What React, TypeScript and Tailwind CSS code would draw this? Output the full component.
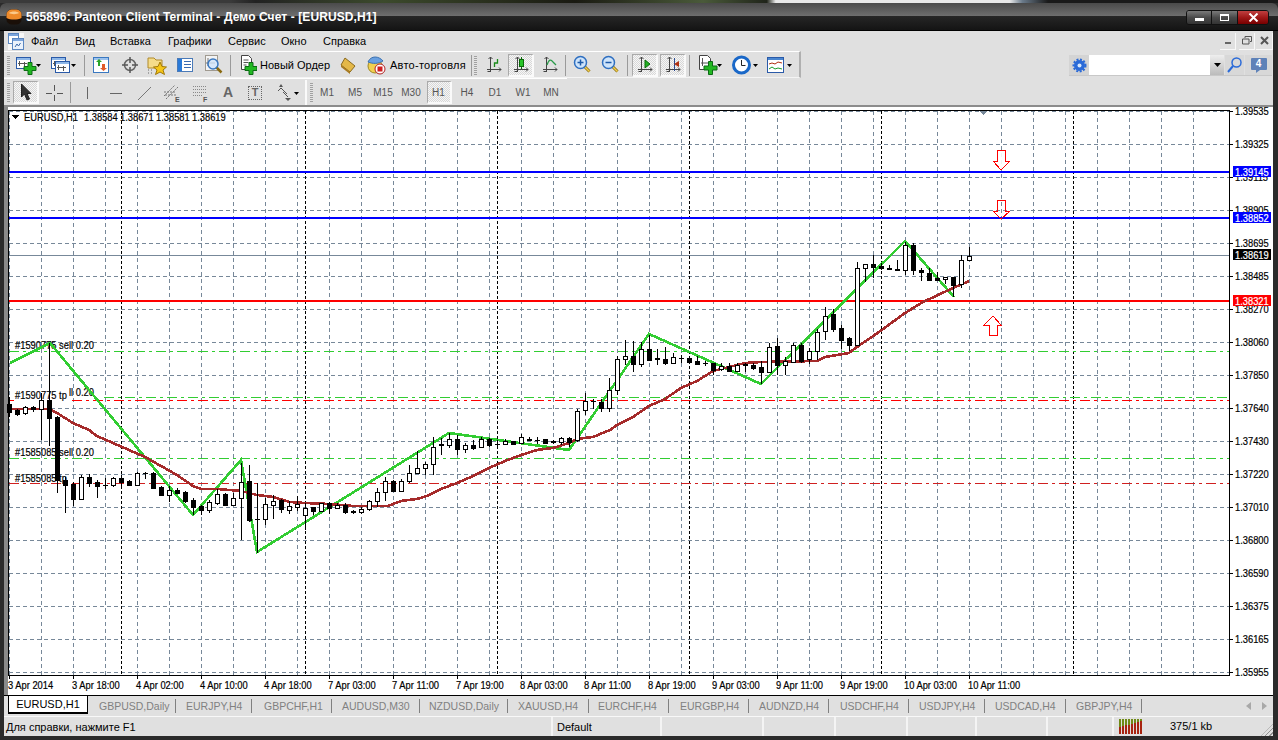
import React from "react";

type C = [number, number, number, number, number];
// high, bodyTop, bodyBottom, low, kind (0 black, 1 white, 2 doji); values read at 3x from an origin
const G1: C[] = [[200,222,245,260,0],[236,240,252,258,0],[228,232,250,256,1],[228,232,236,245,0],[190,210,236,330,1],[40,210,263,348,0],[258,262,450,490,0],[440,450,464,548,0],[455,462,506,528,0],[436,442,506,508,1],[432,442,458,472,0],[450,456,467,503,0],[445,465,465,478,2],[440,445,466,470,1],[435,445,456,468,0],[450,454,464,466,0],[425,430,464,466,1],[425,429,429,447,2],[425,429,473,476,0],[468,472,496,498,0],[468,481,494,515,1],[475,481,488,490,0],[484,487,512,520,0],[503,511,530,555,0],[524,528,539,554,0],[510,517,539,550,1],[478,493,518,525,1],[490,493,524,528,0],[490,505,524,526,1],[400,457,505,630,1],[405,454,570,575,0],[460,568,568,668,2],[505,523,568,586,1]];
const G2: C[] = [[226,244,254,296,1],[238,240,268,278,0],[244,258,269,282,1],[228,252,260,272,1],[250,264,284,330,1],[262,262,273,285,0],[248,250,272,275,1],[247,250,264,282,0],[250,256,263,266,1],[250,256,275,282,0],[270,273,277,282,0],[262,268,277,282,1],[240,244,268,272,1],[205,217,244,262,1],[172,184,217,242,1],[180,184,214,216,0],[178,184,214,216,1],[136,160,184,190,1],[92,145,160,162,1],[125,133,145,165,1],[52,82,133,165,1],[55,72,76,105,0],[40,58,74,84,1],[44,58,86,106,0],[70,76,86,98,1],[60,76,83,90,0],[52,56,82,84,1],[55,58,74,80,0],[60,72,72,80,2],[58,64,73,75,1],[62,64,71,74,0],[42,52,70,72,1],[50,56,60,62,0],[52,60,60,72,2],[56,58,68,72,0],[60,63,67,72,0],[52,53,65,76,1],[50,53,65,80,0]];
const G3: C[] = [[268,274,360,366,1],[220,244,270,285,1],[238,242,242,266,2],[238,246,265,275,0],[175,211,265,275,1],[108,118,211,225,1],[60,109,118,135,1],[62,108,131,155,0],[65,88,131,140,1],[45,88,119,120,0],[88,114,118,135,0],[80,118,129,135,0],[100,112,128,132,1],[105,114,114,128,2],[108,115,125,132,0],[108,124,131,134,0],[122,130,130,138,2],[128,130,149,165,0],[130,139,148,152,1],[130,139,152,155,0],[128,134,152,154,1],[128,133,136,155,0],[128,135,143,150,0],[122,142,155,192,0],[70,80,155,158,1],[55,78,134,165,0],[110,124,134,165,1],[70,76,125,130,1],[70,76,124,130,0],[85,92,118,132,1],[28,35,92,120,1]];
const G4: C[] = [[202,229,274,300,1],[208,222,266,275,0],[255,265,300,328,0],[290,294,315,332,0],[66,85,315,316,1]];
const G5: C[] = [[478,478,490,530,1],[450,478,485,520,0],[475,483,490,495,0],[480,489,493,495,0],[465,492,496,497,0],[410,420,496,510,1],[415,420,496,510,0],[490,496,502,527,0],[490,505,525,527,0],[500,520,524,526,0],[517,517,523,538,1],[516,516,540,575,0],[450,466,538,548,1],[426,452,466,467,1]];
const conv = (g: C[], o: number): C[] => g.map(([h, t, b, l, k]) => [o + h / 3, o + t / 3, o + b / 3, o + l / 3, k]);
const candles: C[] = [...conv(G1, 330), ...conv(G2, 420), ...conv(G3, 320), ...conv(G4, 240), ...conv(G5, 105)];

const zig = "10,363 50,343 193,515 241,460 257,552 449,433 569,450 649,334 761,384 905,241 954,297";
const ma = "9,409 49,409 57,413 73,423 89,430 97,436 113,443 129,450 145,457 161,466 177,475 193,486 201,489 217,489 241,491 249,493 257,495 273,497 290,502 305,503 329,504 353,506 388,506 401,501 417,499 427,496 441,489 457,483 473,476 489,468 505,461 521,455 537,450 553,448 569,443 577,439 593,437 610,430 617,425 633,417 649,406 665,399 681,388 697,381 713,371 729,367 745,363 761,362 817,361 825,357 849,353 857,347 879,332 905,313 923,302 953,288 969,281";

const prices = ["1.39535","1.39325","1.39115","1.38905","1.38695","1.38485","1.38270","1.38060","1.37850","1.37640","1.37430","1.37220","1.37010","1.36800","1.36590","1.36375","1.36165","1.35955"];
const times = ["3 Apr 2014","3 Apr 18:00","4 Apr 02:00","4 Apr 10:00","4 Apr 18:00","7 Apr 03:00","7 Apr 11:00","7 Apr 19:00","8 Apr 03:00","8 Apr 11:00","8 Apr 19:00","9 Apr 03:00","9 Apr 11:00","9 Apr 19:00","10 Apr 03:00","10 Apr 11:00"];

const T = ({ x, y, c = "#000", children }: { x: number; y: number; c?: string; children: React.ReactNode }) => (
  <text transform={`translate(${x} ${y}) scale(0.85 1)`} fontSize={11} fill={c} stroke={c} strokeWidth={0.2} fontFamily="'Liberation Sans', Arial, sans-serif">{children}</text>
);

function Chart() {
  const hs = prices.map((_, i) => 111 + i * 33);
  const vs = Array.from({ length: 38 }, (_, i) => 9 + 32 * i).filter((x) => x < 1229);
  return (
    <svg width={1269} height={588} viewBox="4 107 1269 588" className="block shrink-0">
      <rect x={4} y={107} width={1269} height={588} fill="#fff" />
      <rect x={4} y={107} width={4} height={588} fill="#8a8a8a" />
      <g shapeRendering="crispEdges">
        <g stroke="#778899" strokeWidth={1} strokeDasharray="4 3">
          {hs.map((y) => <line key={y} x1={9} x2={1229} y1={y + 0.5} y2={y + 0.5} />)}
          {vs.map((x) => <line key={x} x1={x + 0.5} x2={x + 0.5} y1={111} y2={675} />)}
        </g>
        <g stroke="#000" strokeWidth={1} strokeDasharray="3 2">
          {[121, 305, 497, 689, 881, 1073].map((x) => <line key={x} x1={x + 0.5} x2={x + 0.5} y1={111} y2={675} />)}
        </g>
        <line x1={9} x2={1229} y1={255.5} y2={255.5} stroke="#778899" />
        <g strokeWidth={1} strokeDasharray="10 4 3 4">
          <line x1={9} x2={1229} y1={351.5} y2={351.5} stroke="#32cd32" />
          <line x1={104} x2={1229} y1={397.5} y2={397.5} stroke="#32cd32" />
          <line x1={9} x2={1229} y1={400.5} y2={400.5} stroke="#ff0000" />
          <line x1={9} x2={1229} y1={458.5} y2={458.5} stroke="#32cd32" />
          <line x1={9} x2={1229} y1={483.5} y2={483.5} stroke="#d02020" />
        </g>
      </g>
      <T x={15} y={349}>#1590775 sell 0.20</T>
      <T x={15} y={396}>#1590775 sell 0.20</T>
      <rect x={14} y={388} width={55} height={14} fill="#fff" />
      <T x={15} y={399}>#1590775 tp</T>
      <T x={15} y={456}>#1585085 sell 0.20</T>
      <T x={15} y={482}>#1585085 tp</T>
      <g shapeRendering="crispEdges">
        <rect x={9} y={171} width={1220} height={2} fill="#0000ff" />
        <rect x={9} y={217} width={1220} height={2} fill="#0000ff" />
        <rect x={9} y={300} width={1220} height={2} fill="#ff0000" />
        <polyline points={zig} fill="none" stroke="#32cd32" strokeWidth={2.6} />
        <polyline points={ma} fill="none" stroke="#a52a2a" strokeWidth={2.6} />
        {candles.map(([h, t, b, l, k], i) => {
          const x = 9 + 8 * i;
          const top = Math.round(t), bot = Math.round(b);
          return (
            <g key={i}>
              <rect x={x} y={Math.round(h)} width={1} height={Math.max(1, Math.round(l) - Math.round(h))} fill="#000" />
              {k === 2 ? (
                <rect x={x - 2} y={top} width={5} height={1} fill="#000" />
              ) : (
                <>
                  <rect x={x - 2} y={top} width={5} height={Math.max(2, bot - top + 1)} fill="#000" />
                  {k === 1 && bot - top > 1 && <rect x={x - 1} y={top + 1} width={3} height={bot - top - 1} fill="#fff" />}
                </>
              )}
            </g>
          );
        })}
        <polygon points="979,110 988,110 983.5,115" fill="#778899" />
        <polygon points="997,150 1005,150 1005,161 1010,161 1001,170 993,161 997,161" fill="#fff" fillOpacity={0.9} stroke="#ff0000" />
        <polygon points="997,200 1005,200 1005,211 1010,211 1001,219 993,211 997,211" fill="none" stroke="#ff0000" />
        <polygon points="993,316 1001,325 997,325 997,335 989,335 989,325 984,325" fill="#fff" stroke="#ff0000" />
        <rect x={8} y={110} width={1222} height={1} fill="#000" />
        <rect x={8} y={110} width={1} height={566} fill="#000" />
        <rect x={8} y={675} width={1222} height={1} fill="#000" />
        <rect x={1229} y={110} width={1} height={566} fill="#000" />
        {hs.map((y) => <rect key={y} x={1230} y={y} width={3} height={1} fill="#000" />)}
        {times.map((_, i) => <rect key={i} x={9 + 64 * i} y={676} width={1} height={3} fill="#000" />)}
        <polygon points="12,115 19,115 15.5,119" fill="#000" />
      </g>
      <T x={24} y={121}>EURUSD,H1</T>
      {["1.38584", "1.38671", "1.38581", "1.38619"].map((p, i) => <T key={p} x={84 + 36 * i} y={121}>{p}</T>)}
      {prices.map((p, i) => <T key={p} x={1235} y={111 + i * 33 + 4}>{p}</T>)}
      {times.map((t, i) => <T key={t} x={i === 0 ? 8 : 8 + 64 * i} y={689}>{t}</T>)}
      {[[172, "#0000ff", "1.39145"], [218, "#0000ff", "1.38852"], [255, "#000", "1.38619"], [301, "#ff0000", "1.38321"]].map(([y, c, p]) => (
        <g key={p as string}>
          <rect x={1233} y={(y as number) - 6} width={38} height={11} fill={c as string} shapeRendering="crispEdges" />
          <T x={1235} y={(y as number) + 4} c="#fff">{p}</T>
        </g>
      ))}
    </svg>
  );
}

const Plus = ({ x, y, s = 11 }: { x: number; y: number; s?: number }) => {
  const a = Math.round(s / 3);
  const m = (s - a) / 2;
  return <path transform={`translate(${x} ${y})`} d={`M${m} .5h${a}v${m}h${m}v${a}h-${m}v${m}h-${a}v-${m}h-${m}v-${a}h${m}z`} fill="#22b822" stroke="#0b6b14" />;
};
const Drop = ({ x, y }: { x: number; y: number }) => <polygon points={`${x},${y} ${x + 5},${y} ${x + 2.5},${y + 3}`} fill="#000" />;
const Doc = ({ x, y, w = 14, h = 11 }: { x: number; y: number; w?: number; h?: number }) => (
  <g>
    <rect x={x + 0.5} y={y + 0.5} width={w} height={h} fill="#fff" stroke="#2a5aa8" />
    <rect x={x + 1} y={y + 1} width={w - 1} height={2} fill="#8fb8e8" />
    <path d={`M${x + 3.5} ${y + 4}v5M${x + 2} ${y + 6.5}h9M${x + 8.5} ${y + 5}v5`} stroke="#555" fill="none" />
  </g>
);
const I = ({ w, children, cls }: { w: number; cls: string; children: React.ReactNode }) => (
  <svg width={w} height={20} viewBox={`0 0 ${w} 20`} className={`block shrink-0 ${cls}`}>{children}</svg>
);
const Axes = () => <path d="M4.5 2v15M1 14.5h14M2.5 4l2-2 2 2M13 12.5l2 2-2 2M1.500 16.500h3" stroke="#444" fill="none" />;
const Sep = ({ cls }: { cls: string }) => <div className={`w-[1px] h-[21px] bg-[#9a9a9a] shrink-0 ${cls}`} />;
const Grip = ({ cls }: { cls: string }) => <div className={`w-[3px] h-[19px] shrink-0 bg-[repeating-linear-gradient(to_bottom,#a0a0a0_0_1px,#e4e4e4_1px_2px)] ${cls}`} />;
const Pressed = ({ cls, children }: { cls: string; children: React.ReactNode }) => (
  <div className={`w-[26px] h-[23px] shrink-0 flex items-center justify-center border-t border-l border-[#aaaaaa] border-r-2 border-b-2 border-r-[#fafafa] border-b-[#fafafa] bg-[repeating-conic-gradient(#f6f6f6_0_25%,#d8d8d8_0_50%)] bg-size-[2px_2px] ${cls}`}>{children}</div>
);
const Glass = ({ minus }: { minus?: boolean }) => (
  <>
    <path d="M11 11l5.500 5.500" stroke="#8a6a10" strokeWidth={3} />
    <path d="M11.500 11.500l5 5" stroke="#f0cf50" strokeWidth={1.500} />
    <circle cx={7.500} cy={7.500} r={6} fill="#cfe4fa" stroke="#2f6fc0" strokeWidth={1.500} />
    <path d={minus ? "M4.500 7.500h6" : "M4.500 7.500h6M7.500 4.500v6"} stroke="#1d5aa8" strokeWidth={1.500} />
  </>
);

function Toolbar1() {
  return (
    <div className="w-[797px] h-[27px] pt-[1px] shrink-0 flex items-center border-t border-t-white border-r-2 border-r-[#b0b0b0] border-b border-b-[#f4f4f4]">
      <Grip cls="ml-[3px]" />
      <I w={25} cls="ml-[6px]"><Doc x={0} y={2} /><Plus x={8} y={7} s={12} /><Drop x={20} y={9} /></I>
      <I w={25} cls="ml-[10px]"><Doc x={0} y={2} /><Doc x={4} y={6} /><Drop x={20} y={9} /></I>
      <Sep cls="ml-[8px]" />
      <I w={16} cls="ml-[8px]">
        <rect x=".5" y="2.500" width="15" height="15" fill="#fff" stroke="#3a78c0" />
        <rect x="1" y="3" width="14" height="2" fill="#9cc2ee" />
        <path d="M5 11V7H3l3-3 3 3H7v4z" fill="#2aa52a" /><path d="M9 9v4H7l3.500 3 3.500-3h-2V9z" fill="#e05a2a" />
      </I>
      <I w={18} cls="ml-[12px]">
        <circle cx="9" cy="10" r="5.500" fill="none" stroke="#666" strokeWidth="1.500" />
        <path d="M9 2v6M9 12v6M1 10h6M11 10h6" stroke="#555" strokeWidth="1.500" />
      </I>
      <I w={20} cls="ml-[8px]">
        <path d="M1 3h6l2 2h6v8H1z" fill="#f5dc8a" stroke="#b08a2a" />
        <path d="M1 15h1M4 15h1M1 18h1M4 18h1" stroke="#666" />
        <polygon points="13,7 15,11.500 19.500,12 16,15 17.500,19.500 13,17 8.500,19.500 10,15 6.500,12 11,11.500" fill="#f5c518" stroke="#a07808" />
      </I>
      <I w={16} cls="ml-[10px]">
        <rect x=".5" y="3.500" width="15" height="13" fill="#fff" stroke="#4a7ab8" />
        <rect x="1" y="4" width="4" height="12" fill="#2a7ad8" />
        <path d="M7 6.500h7M7 9.500h7M7 12.500h7" stroke="#3a6ab0" />
      </I>
      <I w={18} cls="ml-[12px]">
        <rect x=".5" y=".5" width="12" height="15" fill="#f4f4f4" stroke="#a09a90" />
        <path d="M3 3v8M1 8h9" stroke="#777" />
        <path d="M11 12l5.500 5.500" stroke="#8a6a10" strokeWidth="2.500" />
        <circle cx="8" cy="9" r="5" fill="#cfe4fa" fillOpacity=".8" stroke="#3a78c0" strokeWidth="1.500" />
      </I>
      <Sep cls="ml-[7px]" />
      <I w={17} cls="ml-[9px]">
        <path d="M1.500.5h7l3 3v11h-10z" fill="#fff" stroke="#444" />
        <path d="M3.500 5h5M3.500 7.500h5M3.500 10h3" stroke="#555" />
        <Plus x={5} y={7} s={12} />
      </I>
      <span className="ml-[3px] w-[69px] shrink-0 whitespace-nowrap text-[11px] text-black">Новый Ордер</span>
      <I w={16} cls="ml-[11px]">
        <polygon points="5,3 15,11 10,17 1,10" fill="#e4b848" stroke="#8a6a20" />
        <polygon points="1,10 10,17 10,19 1,12" fill="#a87a20" />
      </I>
      <I w={19} cls="ml-[11px]">
        <circle cx="8" cy="11" r="7" fill="#f0d050" stroke="#a08820" />
        <path d="M1 7c3-7 11-6 15-1-5 3-10 3-15 1z" fill="#6aa0e0" stroke="#3a70b0" />
        <circle cx="13" cy="14" r="5" fill="#fff" stroke="#b02020" />
        <rect x="10.500" y="11.500" width="5" height="5" fill="#d02020" />
      </I>
      <span className="ml-[4px] w-[76px] shrink-0 whitespace-nowrap text-[11px] tracking-[0.25px] text-black">Авто-торговля</span>
      <Sep cls="ml-[5px]" />
      <Grip cls="ml-[2px]" />
      <I w={16} cls="ml-[9px]"><Axes /><path d="M8.500 12V8H11.500V4" stroke="#1a8a1a" fill="none" strokeWidth="1.300" /></I>
      <Pressed cls="ml-[6px]">
        <svg width="16" height="20" viewBox="0 0 16 20"><Axes /><path d="M8.500 2v12" stroke="#0a6a0a" /><rect x="6.500" y="4.500" width="4" height="7" fill="#28c428" stroke="#0a6a0a" /></svg>
      </Pressed>
      <I w={16} cls="ml-[8px]"><Axes /><path d="M5 10c2-6 4-6 6-3l3 3" stroke="#2a9a4a" fill="none" strokeWidth="1.300" /></I>
      <Sep cls="ml-[7px]" />
      <I w={18} cls="ml-[7px]"><Glass /></I>
      <I w={18} cls="ml-[10px]"><Glass minus /></I>
      <Sep cls="ml-[8px]" />
      <Pressed cls="ml-[4px]">
        <svg width="16" height="20" viewBox="0 0 16 20"><Axes /><polygon points="8,5 13,9 8,13" fill="#22b022" stroke="#0a6a0a" /></svg>
      </Pressed>
      <Pressed cls="ml-[2px]">
        <svg width="16" height="20" viewBox="0 0 16 20"><Axes /><path d="M9.500 3v13" stroke="#2a4a90" /><polygon points="9,9 14,6 14,12" fill="#b03010" /></svg>
      </Pressed>
      <Sep cls="ml-[3px]" />
      <I w={23} cls="ml-[9px]">
        <path d="M.5.500h8l3 3v11H.5z" fill="#fff" stroke="#444" /><path d="M3.500 3v8M2 8h7" stroke="#555" />
        <Plus x={5} y={6} s={13} /><Drop x={18} y={9} />
      </I>
      <I w={28} cls="ml-[10px]">
        <circle cx="9.500" cy="10" r="8" fill="#fff" stroke="#1a68c8" strokeWidth="3" />
        <path d="M9.500 5v5.500h4" stroke="#222" fill="none" /><Drop x={21} y={9} />
      </I>
      <I w={26} cls="ml-[7px]">
        <rect x=".5" y="2.500" width="16" height="15" fill="#fff" stroke="#2a5aa8" />
        <rect x="1" y="3" width="15" height="2" fill="#4a86d0" />
        <path d="M2 9l3-1 3 1 3-2 4 1" stroke="#b03010" fill="none" /><path d="M2 14l3-2 3 2 3-1 4 1" stroke="#1a9a2a" fill="none" />
        <Drop x={20} y={9} />
      </I>
    </div>
  );
}

function Toolbar2() {
  const periods = ["M1", "M5", "M15", "M30"];
  const rest = ["H4", "D1", "W1", "MN"];
  return (
    <div className="w-[563px] h-[27px] pt-[1px] shrink-0 flex items-center border-t border-t-white">
      <Grip cls="ml-[3px]" />
      <Pressed cls="ml-[3px]">
        <svg width="12" height="18" viewBox="0 0 12 18"><path d="M1.500 1v13l3-3 2.500 6 2.500-1-2.500-5.500h4z" fill="#333" stroke="#222" /></svg>
      </Pressed>
      <I w={18} cls="ml-[6px]"><path d="M9.500 2v6M9.500 12v6M1 10.500h6M12 10.500h6" stroke="#555" /></I>
      <Sep cls="ml-[7px]" />
      <I w={16} cls="ml-[8px]"><path d="M8.500 4v12" stroke="#666" /></I>
      <I w={16} cls="ml-[13px]"><path d="M2 10.500h12" stroke="#666" /></I>
      <I w={16} cls="ml-[12px]"><path d="M2 17L15 4" stroke="#777" /></I>
      <I w={18} cls="ml-[11px]">
        <path d="M1 13L12 2M3 16L15 4M1 9h12M2 12h11" stroke="#777" strokeDasharray="2 1" fill="none" />
        <text x="12" y="19" fontSize="7" fontWeight="bold" fill="#555" fontFamily="'Liberation Sans', sans-serif">E</text>
      </I>
      <I w={18} cls="ml-[11px]">
        <path d="M1 3.500h13M1 6.500h13M1 9.500h13M1 12.500h9" stroke="#888" strokeDasharray="1 1" />
        <text x="11" y="19" fontSize="7" fontWeight="bold" fill="#555" fontFamily="'Liberation Sans', sans-serif">F</text>
      </I>
      <span className="ml-[10px] w-[16px] shrink-0 text-center text-[14px] font-bold text-[#666]">A</span>
      <div className="ml-[12px] w-[14px] h-[14px] shrink-0 border border-dotted border-[#666] flex items-center justify-center text-[11px] font-bold leading-none text-[#666]">T</div>
      <I w={25} cls="ml-[14px]">
        <path d="M2 8l3-3 3 3M5 5l6 6" stroke="#555" fill="none" /><polygon points="3,4 7,4 5,1" fill="#555" />
        <polygon points="9,15 15,15 12,18" fill="#555" /><path d="M7 9l5 5" stroke="#555" />
        <Drop x={18} y={9} />
      </I>
      <div className="ml-[4px] w-[2px] h-[26px] shrink-0 bg-[#fafafa]" />
      <Grip cls="ml-[3px]" />
      {periods.map((p) => <span key={p} className="w-[28px] shrink-0 text-center text-[10px] text-[#555]">{p}</span>)}
      <div className="w-[28px] h-[23px] shrink-0 flex items-center justify-center">
        <div className="w-[25px] h-[23px] flex items-center justify-center border-t border-l border-[#aaaaaa] border-r-2 border-b-2 border-r-[#fafafa] border-b-[#fafafa] bg-[repeating-conic-gradient(#f6f6f6_0_25%,#d8d8d8_0_50%)] bg-size-[2px_2px] text-[10px] text-[#555]">H1</div>
      </div>
      {rest.map((p) => <span key={p} className="w-[28px] shrink-0 text-center text-[10px] text-[#555]">{p}</span>)}
    </div>
  );
}

const tabs = [
  { t: "GBPUSD,Daily", c: "w-[88px] pl-[11px]" },
  { t: "EURJPY,H4", c: "w-[76px] pl-[10px]" },
  { t: "GBPCHF,H1", c: "w-[80px] pl-[12px]" },
  { t: "AUDUSD,M30", c: "w-[88px] pl-[10px]" },
  { t: "NZDUSD,Daily", c: "w-[88px] pl-[9px]" },
  { t: "XAUUSD,H4", c: "w-[81px] pl-[10px]" },
  { t: "EURCHF,H4", c: "w-[80px] pl-[9px]" },
  { t: "EURGBP,H4", c: "w-[80px] pl-[11px]" },
  { t: "AUDNZD,H4", c: "w-[80px] pl-[10px]" },
  { t: "USDCHF,H4", c: "w-[80px] pl-[11px]" },
  { t: "USDJPY,H4", c: "w-[76px] pl-[10px]" },
  { t: "USDCAD,H4", c: "w-[81px] pl-[10px]" },
  { t: "GBPJPY,H4", c: "w-[76px] pl-[10px]" },
];
const status = ["w-[109px]", "w-[102px]", "w-[72px]", "w-[72px]", "w-[69px]", "w-[71px]", "w-[66px]"];

export default function App() {
  return (
    <div className="relative w-[1278px] h-[740px] overflow-hidden flex flex-col bg-[#2b2b2b] font-['Liberation_Sans',Arial,sans-serif] text-[11px]">
      <div className="h-[3px] shrink-0 bg-[linear-gradient(to_right,#3a3a3a_0,#3a3a3a_18%,#222_20%,#3c4a2c_30%,#1a1a12_45%,#4a5a3a_55%,#20241a_60%,#e8e8e8_60.700%,#e8e8e8_79%,#6a7a8a_80%,#1a1a1a_82%,#1a1a1a_100%)]" />
      <div className="h-[28px] shrink-0 relative rounded-t-[6px] flex flex-col bg-[#1a1a1a]">
        <div className="h-[13px] rounded-t-[6px] bg-[linear-gradient(to_bottom,#4a4a4a,#6e6e6e)]" />
        <div className="flex-1 bg-[linear-gradient(to_bottom,#262626,#141414)] border-b border-black" />
        <div className="absolute inset-0 flex items-center">
          <svg width="16" height="16" viewBox="0 0 16 16" className="ml-[6px] shrink-0">
            <rect x="0.500" y="0.500" width="15" height="15" rx="5" fill="#1a0f08" />
            <path d="M.5 9V6a5 5 0 0 1 5-5.500h5a5 5 0 0 1 5 5.500v3c-4 2-11 2-15 0z" fill="#ee8a2a" />
            <path d="M3 4c2-2 8-2 10 0-2 1.500-8 1.500-10 0z" fill="#fbc98a" />
          </svg>
          <span className="ml-[4px] text-[12px] font-bold text-white whitespace-nowrap tracking-[0.1px]">565896: Panteon Client Terminal - Демо Счет - [EURUSD,H1]</span>
          <div className="ml-auto mr-[9px] flex h-[15px] rounded-[3px] border border-[#111] overflow-hidden">
            <div className="w-[25px] border-r border-[#111] bg-[linear-gradient(to_bottom,#7a7a7a,#4a4a4a_50%,#333)] flex items-center justify-center">
              <div className="w-[9px] h-[3px] mt-[5px] bg-white" />
            </div>
            <div className="w-[26px] border-r border-[#111] bg-[linear-gradient(to_bottom,#7a7a7a,#4a4a4a_50%,#333)] flex items-center justify-center">
              <div className="w-[9px] h-[7px] border border-white border-t-2" />
            </div>
            <div className="w-[30px] bg-[linear-gradient(to_bottom,#c04040,#a01818_50%,#700)] flex items-center justify-center">
              <svg width="11" height="9" viewBox="0 0 11 9"><path d="M1.500 .5l8 8M9.500 .5l-8 8" stroke="#fff" strokeWidth="2" /></svg>
            </div>
          </div>
        </div>
      </div>
      <div className="ml-[4px] mr-[5px] flex-1 min-h-0 flex flex-col bg-[#e0e0e0]">
        <div className="h-[20px] shrink-0 flex items-center text-black">
          <svg width="16" height="17" viewBox="0 0 16 17" className="ml-[4px] shrink-0">
            <rect width="16" height="17" fill="#f6f6f6" />
            <rect x=".5" y=".5" width="10" height="10" fill="#fff" stroke="#5a86c0" /><rect x="1" y="1" width="9" height="2" fill="#7aa4dc" />
            <rect x="4.500" y="5.500" width="11" height="11" fill="#eaf2fc" stroke="#5a86c0" /><rect x="5" y="6" width="10" height="2" fill="#7aa4dc" />
            <path d="M7 14l2-3 1.500 2 2-3" stroke="#3a68a8" fill="none" />
          </svg>
          <span className="ml-[7px] w-[44px]">Файл</span>
          <span className="w-[35px]">Вид</span>
          <span className="w-[58px]">Вставка</span>
          <span className="w-[60px]">Графики</span>
          <span className="w-[53px]">Сервис</span>
          <span className="w-[42px]">Окно</span>
          <span className="w-[60px]">Справка</span>
          <div className="ml-auto flex items-center">
            <div className="w-[16px] h-[17px] mr-[3px] flex items-end justify-center pb-[5px] border-r border-b border-[#f8f8f8]"><div className="w-[6px] h-[2px] bg-[#666]" /></div>
            <div className="w-[16px] h-[17px] mr-[1px] flex items-center justify-center border-r border-b border-[#f8f8f8]">
              <svg width="10" height="9" viewBox="0 0 10 9"><path d="M3 2V.5h6.500v5H8M.5 3h6.500v5H.5z" fill="none" stroke="#555" /></svg>
            </div>
            <div className="w-[17px] h-[17px] flex items-center justify-center border-r border-b border-[#f8f8f8]">
              <svg width="9" height="9" viewBox="0 0 9 9"><path d="M1 1l7 7M8 1L1 8" stroke="#555" strokeWidth="2" /></svg>
            </div>
          </div>
        </div>
        <div className="h-[27px] shrink-0 flex items-center">
          <Toolbar1 />
          <div className="ml-auto mr-[1px] mt-[2px] flex h-[21px] items-stretch border-b border-[#c8c8c8]">
            <div className="w-[20px] bg-[#d4d4d4] flex items-center justify-center">
              <svg width="15" height="15" viewBox="0 0 15 15"><circle cx="7.500" cy="7.500" r="5" fill="#2a6ad8" stroke="#2a6ad8" strokeWidth="1" /><circle cx="7.500" cy="7.500" r="6" fill="none" stroke="#2a6ad8" strokeWidth="2" strokeDasharray="2 1.500" /><circle cx="7.500" cy="7.500" r="2" fill="#d8e8fc" /></svg>
            </div>
            <div className="w-[121px] bg-white" />
            <div className="w-[14px] bg-[linear-gradient(to_bottom,#eee,#bbb)] flex items-center justify-center"><svg width="7" height="4" viewBox="0 0 7 4"><polygon points="0,0 7,0 3.500,4" fill="#000" /></svg></div>
            <div className="w-[19px] ml-[1px] bg-[#d8d8d8] flex items-center justify-center">
              <svg width="15" height="16" viewBox="0 0 15 16"><circle cx="9.500" cy="5.500" r="4.500" fill="none" stroke="#2a6ad8" strokeWidth="1.500" /><path d="M6 9l-5 6" stroke="#2a6ad8" strokeWidth="2" /></svg>
            </div>
            <div className="w-[27px] ml-[1px] bg-[#d8d8d8] flex items-start justify-center pt-[3px]">
              <div className="relative w-[16px] h-[12px] rounded-[1px] bg-[#5f82b8] text-center text-[10px] font-bold leading-[12px] text-white">
                4
                <div className="absolute left-[5px] top-[12px] w-0 h-0 border-t-[3px] border-t-[#5f82b8] border-r-[4px] border-r-transparent" />
              </div>
            </div>
          </div>
        </div>
        <div className="h-[27px] shrink-0 flex items-center"><Toolbar2 /></div>
        <div className="h-[2px] shrink-0 bg-[#8c8c8c]" />
        <Chart />
        <div className="h-[21px] shrink-0 border-t border-black flex items-start">
          <div className="ml-[4px] w-[80px] h-[18px] shrink-0 bg-white border-x border-b-2 border-black text-center text-[11px] leading-[16px] text-black">EURUSD,H1</div>
          {tabs.map((t) => (
            <div key={t.t} className={`${t.c} h-[14px] mt-[3px] shrink-0 border-r border-[#808080] text-[10.500px] leading-[14px] text-[#808080] whitespace-nowrap overflow-hidden`}>{t.t}</div>
          ))}
          <div className="ml-auto mr-[6px] mt-[6px] flex gap-[11px]">
            <svg width="5" height="8" viewBox="0 0 5 8"><polygon points="5,0 5,8 0,4" fill="#a8a8a8" /></svg>
            <svg width="5" height="8" viewBox="0 0 5 8"><polygon points="0,0 0,8 5,4" fill="#a8a8a8" /></svg>
          </div>
        </div>
        <div className="h-[20px] shrink-0 flex items-stretch border-t border-[#f8f8f8] text-black">
          <div className="w-[549px] pl-[2px] border-r-2 border-r-[#f4f4f4] leading-[20px] shrink-0">Для справки, нажмите F1</div>
          <div className="w-[109px] pl-[4px] border-r-2 border-r-[#f4f4f4] leading-[20px] shrink-0">Default</div>
          {status.slice(1).map((c, i) => <div key={i} className={`${c} border-r-2 border-r-[#f4f4f4] shrink-0`} />)}
          <div className="flex-1 flex items-center relative">
            <svg width="24" height="15" viewBox="0 0 24 15" className="ml-[5px] shrink-0" shapeRendering="crispEdges">
              {[0, 1, 2, 3, 4, 5, 6, 7].map((i) => (
                <g key={i}>
                  <rect x={i * 3} y={0} width={2} height={8 - i * 0.8} fill="#6f8a14" />
                  <rect x={i * 3} y={8 - i * 0.8} width={2} height={7 + i * 0.8} fill="#a82410" />
                </g>
              ))}
            </svg>
            <span className="ml-[27px]">375/1 kb</span>
            <div className="absolute right-0 bottom-0 w-[12px] h-[12px] bg-[repeating-linear-gradient(135deg,#e0e0e0_0_2px,#909090_2px_3px)] [clip-path:polygon(100%_0,100%_100%,0_100%)]" />
          </div>
        </div>
      </div>
      <div className="h-[4px] shrink-0 bg-[#2b2b2b]" />
    </div>
  );
}
